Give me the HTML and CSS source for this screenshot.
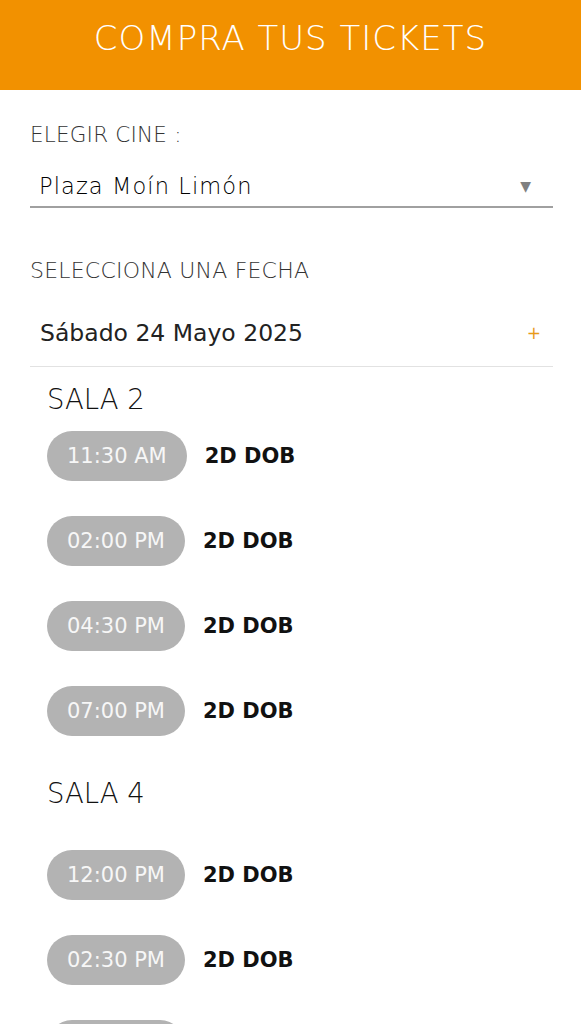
FILE: index.html
```html
<!DOCTYPE html>
<html>
<head>
  <title>Compra tus tickets</title>
  <meta charset="UTF-8">
  <meta name="viewport" content="width=device-width, initial-scale=1.0">
  <link rel="stylesheet" href="styles.css">
</head>
<body>
  <header class="top-bar">
    <h1>COMPRA TUS TICKETS</h1>
  </header>

  <main class="content">
    <!-- Cine -->
    <label class="field-label">ELEGIR CINE :</label>
    <div class="select">
      <span class="select-value">Plaza Moín Limón</span>
      <span class="select-arrow">&#9660;</span>
    </div>

    <!-- Fecha -->
    <label class="field-label field-label--date">SELECCIONA UNA FECHA</label>
    <div class="date-row">
      <span class="date-value">Sábado 24 Mayo 2025</span>
      <span class="date-toggle">+</span>
    </div>

    <section class="sala sala--first">
      <h2>SALA 2</h2>
      <ul class="shows">
        <li class="show"><span class="pill">11:30 AM</span><span class="format">2D DOB</span></li>
        <li class="show"><span class="pill">02:00 PM</span><span class="format">2D DOB</span></li>
        <li class="show"><span class="pill">04:30 PM</span><span class="format">2D DOB</span></li>
        <li class="show"><span class="pill">07:00 PM</span><span class="format">2D DOB</span></li>
      </ul>
    </section>

    <section class="sala">
      <h2>SALA 4</h2>
      <ul class="shows">
        <li class="show"><span class="pill">12:00 PM</span><span class="format">2D DOB</span></li>
        <li class="show"><span class="pill">02:30 PM</span><span class="format">2D DOB</span></li>
        <li class="show"><span class="pill">05:00 PM</span><span class="format">2D DOB</span></li>
      </ul>
    </section>
  </main>
</body>
</html>
```

FILE: styles.css
```css
body { margin: 0; font-family: "DejaVu Sans", "Open Sans", sans-serif; background: #fff; color: #222; }

.top-bar { background: #f29100; height: 90px; box-sizing: border-box; padding-bottom: 14px; }
.top-bar h1 { margin: 0; line-height: 76px; text-align: center; color: #fff; font-size: 34px; font-weight: 200; letter-spacing: 1px; white-space: nowrap; }

.content { padding: 0 28px 0 30px; }

.field-label { display: block; margin-top: 33px; font-size: 21.5px; line-height: 24px; font-weight: 200; letter-spacing: 0.2px; color: #333; white-space: nowrap; }
.field-label--date { margin-top: 51px; font-size: 22px; }

.select { display: flex; justify-content: space-between; align-items: center; margin-top: 24px; padding: 0 22px 5px 9px; border-bottom: 2px solid #a0a0a0; }
.select-value { font-size: 22.5px; line-height: 30px; font-weight: 200; letter-spacing: 1.1px; color: #000; white-space: nowrap; }
.select-arrow { font-size: 14px; color: #808080; }

.date-row { display: flex; justify-content: space-between; align-items: center; margin-top: 35px; padding: 0 12px 18px 10px; border-bottom: 1px solid #e2e2e2; }
.date-value { font-size: 23.5px; line-height: 30px; color: #222; white-space: nowrap; }
.date-toggle { font-size: 17px; color: #e89a1a; }

.sala { padding-left: 17px; }
.sala h2 { margin: 41px 0 0; font-size: 27.5px; line-height: 32px; font-weight: 200; color: #111; white-space: nowrap; }
.sala--first h2 { margin-top: 16px; }

.shows { list-style: none; margin: 41px 0 0; padding: 0; }
.sala--first .shows { margin-top: 16px; }
.show { display: flex; align-items: center; height: 50px; margin-bottom: 35px; }
.pill { display: inline-block; height: 50px; line-height: 50px; padding: 0 20px; border-radius: 25px; background: #b3b3b3; color: #f7f7f7; font-size: 21px; white-space: nowrap; }
.format { margin-left: 18px; font-size: 21px; font-weight: 700; color: #111; white-space: nowrap; }
```
